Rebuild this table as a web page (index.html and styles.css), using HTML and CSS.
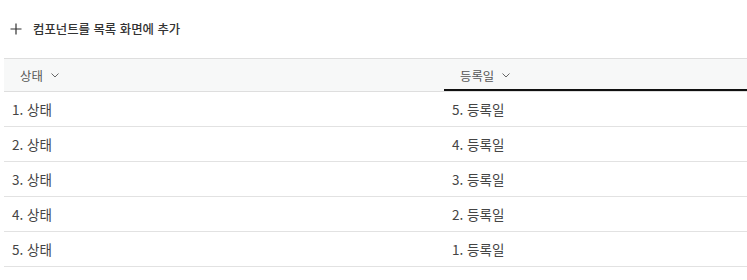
FILE: index.html
```html
<!DOCTYPE html>
<html lang="ko">
<head>
<meta charset="utf-8">
<link rel="stylesheet" href="styles.css">
</head>
<body>
<div class="page">
  <div class="toolbar">
    <button class="add-btn">
      <svg class="plus" width="12" height="12" viewBox="0 0 12 12"><path d="M6 0.5V11.5M0.5 6H11.5" stroke="#333" stroke-width="1.2" fill="none"/></svg>
      <span>컴포넌트를 목록 화면에 추가</span>
    </button>
  </div>
  <table class="grid">
    <thead>
      <tr>
        <th class="col-a"><span class="h">상태</span><svg class="chev" width="8" height="5" viewBox="0 0 8 5"><path d="M0.5 0.5L4 4L7.5 0.5" stroke="#666" fill="none"/></svg></th>
        <th class="col-b active"><span class="h">등록일</span><svg class="chev" width="8" height="5" viewBox="0 0 8 5"><path d="M0.5 0.5L4 4L7.5 0.5" stroke="#666" fill="none"/></svg></th>
      </tr>
    </thead>
    <tbody>
      <tr><td>1. 상태</td><td>5. 등록일</td></tr>
      <tr><td>2. 상태</td><td>4. 등록일</td></tr>
      <tr><td>3. 상태</td><td>3. 등록일</td></tr>
      <tr><td>4. 상태</td><td>2. 등록일</td></tr>
      <tr><td>5. 상태</td><td>1. 등록일</td></tr>
    </tbody>
  </table>
</div>
</body>
</html>
```

FILE: styles.css
```css
html, body {
  margin: 0;
  padding: 0;
  background: #fff;
}
body {
  font-family: "Noto Sans CJK KR", "Noto Sans", sans-serif;
  color: #444;
}
.page {
  padding: 0 0 0 4px;
  width: 743px;
}
.toolbar {
  height: 58px;
  display: flex;
  align-items: center;
}
.add-btn {
  display: flex;
  align-items: center;
  gap: 11px;
  border: 0;
  background: none;
  padding: 0 0 0 6px;
  margin-top: -1px;
  font-family: inherit;
  font-size: 12.4px;
  font-weight: 500;
  color: #333;
  cursor: pointer;
}
.plus { display: block; }
.grid {
  width: 743px;
  border-collapse: collapse;
  table-layout: fixed;
}
.grid th {
  height: 33px;
  padding: 0 0 0 16px;
  text-align: left;
  font-weight: 400;
  font-size: 12.4px;
  color: #555;
  background: #f7f8f8;
  border-top: 1px solid #dedede;
  border-bottom: 1px solid #dedede;
  box-sizing: border-box;
}
.grid th.col-a { width: 440px; }
.grid th.active {
  box-shadow: inset 0 -2px 0 #111;
}
.h { vertical-align: middle; }
.chev {
  margin-left: 8px;
  vertical-align: middle;
}
.grid td {
  height: 34px;
  padding: 0 0 0 8px;
  font-size: 13.5px;
  color: #444;
  border-bottom: 1px solid #e2e2e2;
}
```
